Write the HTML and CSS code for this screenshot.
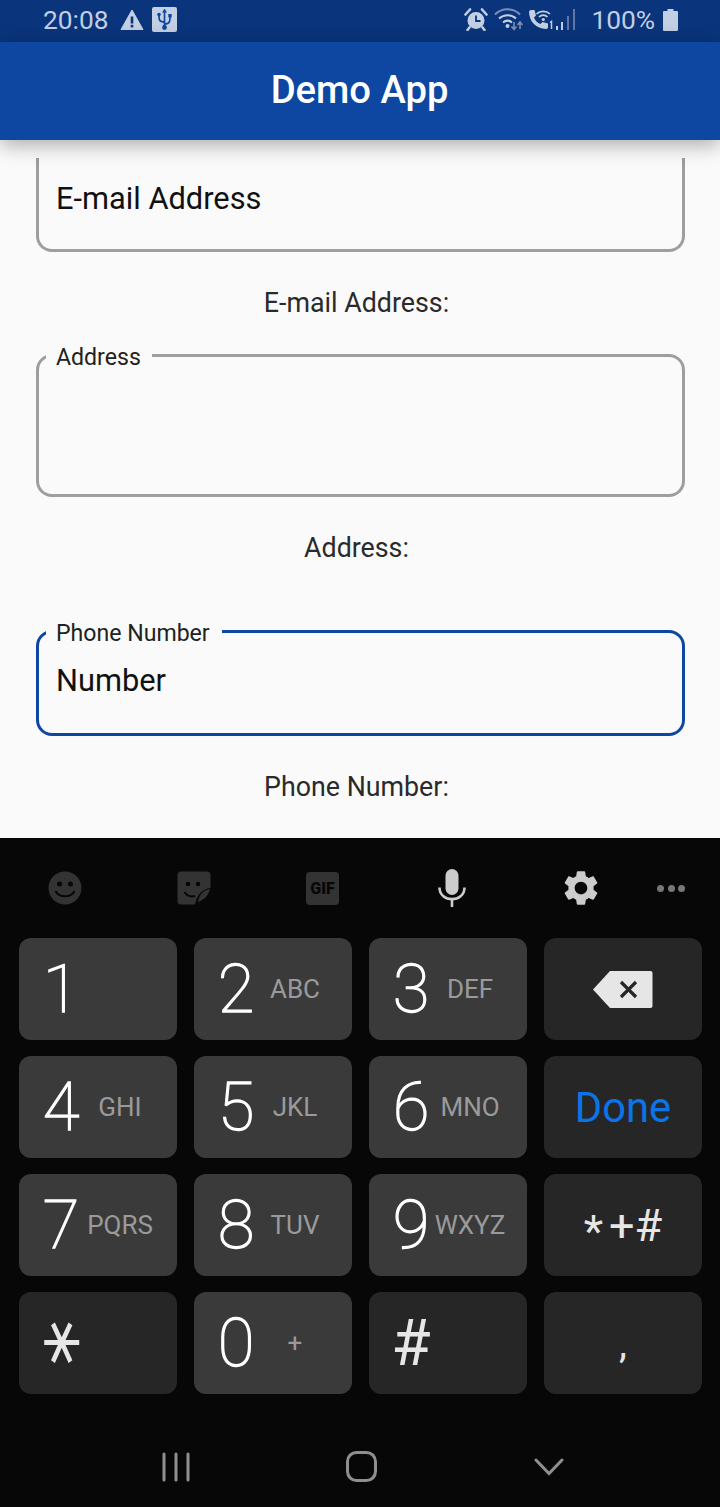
FILE: index.html
```html
<!DOCTYPE html>
<html lang="en">
<head>
    <meta charset="UTF-8">
    <meta name="viewport" content="width=device-width, initial-scale=1.0">
    <title>Demo App</title>
    <link rel="stylesheet" href="styles.css">
</head>
<body>
    <div class="status-bar">
        <span class="status-time">20:08</span>
        <svg class="icon-warning" width="24" height="22" viewBox="0 0 24 22">
            <path d="M12 1 L23 20.5 H1 Z" fill="#c3cfe2" stroke="#c3cfe2" stroke-width="1" stroke-linejoin="round"/>
            <rect x="10.7" y="7.5" width="2.6" height="7" fill="#0a357c"/>
            <rect x="10.7" y="15.8" width="2.6" height="2.6" fill="#0a357c"/>
        </svg>
        <svg class="icon-usb" width="25" height="25" viewBox="0 0 25 25">
            <rect width="25" height="25" rx="2" fill="#c3cfe2"/>
            <path d="M12.5 2.5 V21 M12.5 15 C7 15 7 12.500 7 8.500 M12.500 17 C18 17 18 14 18 10" fill="none" stroke="#0d47a1" stroke-width="1.700"/>
            <path d="M12.500 2 L15 5.500 H10 Z" fill="#0d47a1"/>
            <circle cx="7" cy="7.500" r="1.800" fill="#0d47a1"/>
            <rect x="16.300" y="7" width="3.400" height="3.400" fill="#0d47a1"/>
            <circle cx="12.500" cy="20.500" r="2.400" fill="#0d47a1"/>
        </svg>
        <div class="status-right">
            <svg width="24" height="23" viewBox="0 0 24 23">
                <circle cx="12" cy="12.500" r="8.500" fill="#c3cfe2"/>
                <path d="M12 7.500 V13 H16.500" fill="none" stroke="#0a357c" stroke-width="1.800"/>
                <path d="M1.500 6.500 L6 1.500 M22.500 6.500 L18 1.500 M5.500 19.500 L3.500 22 M18.500 19.500 L20.500 22" stroke="#c3cfe2" stroke-width="2.600" stroke-linecap="round"/>
            </svg>
            <svg class="icon-wifi" width="30" height="23" viewBox="0 0 30 23">
                <path d="M1 6.500 C8 -0.500 19 -0.500 26 6.500" fill="none" stroke="#7d90b4" stroke-width="2"/>
                <path d="M5 10.500 C10 6 17 6 22 10.500" fill="none" stroke="#c3cfe2" stroke-width="2"/>
                <path d="M9 14.500 C12 12 15 12 18 14.500" fill="none" stroke="#c3cfe2" stroke-width="2"/>
                <circle cx="13.500" cy="18" r="2" fill="#c3cfe2"/>
                <path d="M20 14 V21 M17.500 18.500 L20 21.500 L22.500 18.500" fill="none" stroke="#7d90b4" stroke-width="1.600"/>
                <path d="M26 21 V14.500 M23.500 17 L26 14 L28.500 17" fill="none" stroke="#7d90b4" stroke-width="1.600"/>
            </svg>
            <svg class="icon-call" width="26" height="22" viewBox="0 0 26 22">
                <path d="M4 1 L7.500 1 L9 6.500 L7 8.500 C8 11.500 10.500 14 13.500 15 L15.500 13 L21 14.500 L21 18 C21 19.500 20 20 19 20 C9 19.500 2.500 13 2 3 C2 2 3 1 4 1 Z" fill="#c3cfe2"/>
                <path d="M9.500 5 C13 1.500 19.500 1.500 23 5 M12 8 C14.500 5.500 18 5.500 20.500 8" fill="none" stroke="#c3cfe2" stroke-width="1.700"/>
                <circle cx="16.300" cy="10.500" r="1.600" fill="#c3cfe2"/>
                <path d="M23 13.500 L24.500 12.500 V20" fill="none" stroke="#c3cfe2" stroke-width="1.500"/>
            </svg>
            <svg class="icon-signal" width="20" height="23" viewBox="0 0 20 23">
                <rect x="0" y="18" width="2" height="4" fill="#c3cfe2"/>
                <rect x="5" y="14" width="2" height="8" fill="#c3cfe2"/>
                <rect x="11" y="8" width="2" height="14" fill="#5f77a3"/>
                <rect x="17" y="1" width="2" height="21" fill="#5f77a3"/>
            </svg>
            <span class="status-battery-text">100%</span>
            <svg width="15" height="22" viewBox="0 0 15 22">
                <path d="M4.500 0 H10.500 V2 H14 A1 1 0 0 1 15 3 V21 A1 1 0 0 1 14 22 H1 A1 1 0 0 1 0 21 V3 A1 1 0 0 1 1 2 H4.500 Z" fill="#c3cfe2"/>
            </svg>
        </div>
    </div>

    <header class="app-bar">Demo App</header>

    <main class="content">
        <div class="field field-cut">
            <div class="field-value">E-mail Address</div>
        </div>
        <p class="caption">E-mail Address:</p>

        <fieldset class="field field-tall">
            <legend>Address</legend>
        </fieldset>
        <p class="caption">Address:</p>

        <fieldset class="field field-focus">
            <legend>Phone Number</legend>
            <div class="field-value">Number</div>
        </fieldset>
        <p class="caption">Phone Number:</p>
    </main>

    <section class="keyboard">
        <div class="kb-tools">
            <svg width="34" height="34" viewBox="0 0 34 34">
                <circle cx="17" cy="17" r="16.500" fill="#333"/>
                <circle cx="11.500" cy="13" r="2.500" fill="#070707"/>
                <circle cx="22.500" cy="13" r="2.500" fill="#070707"/>
                <path d="M7.500 20 C11 27 23 27 26.500 20" fill="none" stroke="#070707" stroke-width="2"/>
            </svg>
            <svg width="34" height="34" viewBox="0 0 34 34">
                <path d="M4 0.500 H30 A3.500 3.500 0 0 1 33.500 4 V17 C25 18 20 24 18 33.500 H4 A3.500 3.500 0 0 1 0.500 30 V4 A3.500 3.500 0 0 1 4 0.500 Z" fill="#333"/>
                <path d="M33 18 C26 19 22 24 21 31 C27 29 31 25 33 18 Z" fill="#333"/>
                <circle cx="11" cy="13" r="2.300" fill="#070707"/>
                <circle cx="21" cy="13" r="2.300" fill="#070707"/>
                <path d="M7.500 21 C10 25 14 26 18 25" fill="none" stroke="#070707" stroke-width="2"/>
            </svg>
            <div class="tool-gif">GIF</div>
            <svg width="28" height="38" viewBox="0 0 28 38">
                <rect x="7.500" y="0" width="13" height="26" rx="6.500" fill="#ccc"/>
                <path d="M1.500 18.500 C1.500 34 26.500 34 26.500 18.500" fill="none" stroke="#ccc" stroke-width="2.600"/>
                <rect x="12.700" y="29" width="2.600" height="9" fill="#ccc"/>
            </svg>
            <svg width="42" height="42" viewBox="0 0 24 24">
                <path fill="#ccc" d="M19.140 12.940c.04-.3.060-.61.060-.94 0-.32-.02-.64-.07-.94l2.030-1.580c.18-.14.230-.41.120-.61l-1.920-3.320c-.12-.22-.37-.29-.59-.22l-2.390.96c-.5-.38-1.030-.7-1.620-.94l-.36-2.540c-.04-.24-.24-.41-.48-.41h-3.840c-.24 0-.43.170-.47.410l-.36 2.540c-.59.240-1.130.57-1.620.94l-2.390-.96c-.22-.08-.47 0-.59.220L2.740 8.870c-.12.210-.08.470.12.610l2.030 1.580c-.05.300-.09.630-.09.940s.02.640.07.940l-2.030 1.580c-.18.140-.23.410-.12.610l1.920 3.320c.12.220.37.290.59.220l2.390-.96c.5.380 1.030.7 1.620.94l.36 2.540c.05.240.24.410.48.410h3.840c.24 0 .44-.17.47-.41l.36-2.540c.59-.24 1.130-.56 1.620-.94l2.390.96c.22.080.47 0 .59-.22l1.920-3.320c.12-.22.070-.47-.12-.61l-2.010-1.580zM12 15.600c-1.980 0-3.600-1.620-3.600-3.600s1.620-3.600 3.600-3.600 3.600 1.620 3.600 3.600-1.620 3.600-3.600 3.600z"/>
            </svg>
            <div class="tool-dots"><i></i><i></i><i></i></div>
        </div>

        <div class="kb-keys">
            <div class="key"><span class="digit">1</span></div>
            <div class="key"><span class="digit">2</span><span class="sub">ABC</span></div>
            <div class="key"><span class="digit">3</span><span class="sub">DEF</span></div>
            <div class="key key-dark key-center">
                <svg width="60" height="37" viewBox="0 0 60 37">
                    <path d="M17 0 H57.500 A2 2 0 0 1 59.500 2 V35 A2 2 0 0 1 57.500 37 H17 L0 18.500 Z" fill="#e6e6e6"/>
                    <path d="M28 11 L43 26 M43 11 L28 26" stroke="#262626" stroke-width="3.200"/>
                </svg>
            </div>

            <div class="key"><span class="digit">4</span><span class="sub">GHI</span></div>
            <div class="key"><span class="digit">5</span><span class="sub">JKL</span></div>
            <div class="key"><span class="digit">6</span><span class="sub">MNO</span></div>
            <div class="key key-dark key-center key-done">Done</div>

            <div class="key"><span class="digit">7</span><span class="sub">PQRS</span></div>
            <div class="key"><span class="digit">8</span><span class="sub">TUV</span></div>
            <div class="key"><span class="digit">9</span><span class="sub">WXYZ</span></div>
            <div class="key key-dark key-center key-symbols"><span class="symbol-star">*</span>+#</div>

            <div class="key key-dark"><span class="digit digit-star">⚹</span></div>
            <div class="key"><span class="digit">0</span><span class="sub sub-plus">+</span></div>
            <div class="key key-dark"><span class="digit digit-hash">#</span></div>
            <div class="key key-dark key-center key-comma">,</div>
        </div>

        <nav class="kb-nav">
            <svg width="28" height="30" viewBox="0 0 28 30">
                <path d="M2 2 V28 M14 2 V28 M26 2 V28" stroke="#8f8f8f" stroke-width="3" stroke-linecap="round"/>
            </svg>
            <svg width="32" height="32" viewBox="0 0 32 32">
                <rect x="1.500" y="1.500" width="28" height="28" rx="9" fill="none" stroke="#8f8f8f" stroke-width="3"/>
            </svg>
            <svg width="30" height="20" viewBox="0 0 30 20">
                <path d="M2 3 L15 16.500 L28 3" fill="none" stroke="#8f8f8f" stroke-width="3" stroke-linecap="round"/>
            </svg>
        </nav>
    </section>
</body>
</html>
```

FILE: styles.css
```css
* {
    box-sizing: border-box;
}
body {
    margin: 0;
    width: 720px;
    height: 1507px;
    overflow: hidden;
    display: flex;
    flex-direction: column;
    font-family: Roboto, "Liberation Sans", sans-serif;
    background: #fafafa;
}

/* status bar */
.status-bar {
    height: 42px;
    flex: none;
    display: flex;
    align-items: center;
    padding: 0 42px 3px 43px;
    background: #0a357c;
    color: #c3cfe2;
    font-size: 26.3px;
}
.status-time {
    width: 65px;
}
.icon-warning {
    margin-left: 12px;
}
.icon-usb {
    margin-left: 8px;
}
.status-right {
    margin-left: auto;
    display: flex;
    align-items: center;
}
.icon-wifi {
    margin-left: 6px;
}
.icon-call {
    margin-left: 3px;
}
.icon-signal {
    margin-left: 3px;
}
.status-battery-text {
    margin: 0 8px 0 15px;
}

/* app bar */
.app-bar {
    height: 98px;
    flex: none;
    position: relative;
    z-index: 1;
    display: flex;
    align-items: center;
    justify-content: center;
    padding: 0 1px 2px 0;
    background: #0d47a1;
    color: #fff;
    font-size: 38.2px;
    font-weight: 500;
    box-shadow: 0 4px 20px rgba(0,0,0,0.35);
}

/* form */
.content {
    height: 698px;
    flex: none;
    padding: 18px 35px 0 36px;
    overflow: hidden;
    background: #fafafa;
}
.field {
    margin: 0;
    padding: 0 17px;
    min-width: 0;
    border: 3px solid #9e9e9e;
    border-radius: 16px;
}
.field legend {
    margin-left: -10px;
    padding: 0 12px 0 10px;
    height: 20px;
    line-height: 26px;
    font-size: 23.1px;
    color: #212121;
}
.field-cut {
    height: 94px;
    padding-top: 23px;
    border-top: none;
    border-top-left-radius: 0;
    border-top-right-radius: 0;
}
.field-tall {
    height: 151px;
}
.field-tall legend {
    height: 18px;
    line-height: 24px;
    padding-right: 11px;
}
.field-focus {
    height: 115px;
    border-color: #0d47a1;
}
.field-value {
    font-size: 30.8px;
    line-height: 36px;
    color: #111;
}
.field-focus .field-value {
    padding-top: 22px;
}
.caption {
    margin: 0;
    padding-right: 8px;
    text-align: center;
    font-size: 26.8px;
    line-height: 32px;
    color: #2a2a2a;
}
.content .field-cut + .caption {
    margin: 35px 0 27px;
}
.content .field-tall + .caption {
    margin: 35px 0 57px;
}
.content .field-focus + .caption {
    margin-top: 35px;
}

/* keyboard */
.keyboard {
    flex: 1;
    background: #070707;
}
.kb-tools {
    height: 100px;
    display: grid;
    grid-template-columns: repeat(5, 129px) 52px;
    justify-items: center;
    align-items: center;
}
.tool-gif {
    width: 33px;
    height: 33px;
    display: flex;
    align-items: center;
    justify-content: center;
    border-radius: 4px;
    background: #333;
    color: #070707;
    font-size: 16px;
    font-weight: 900;
}
.tool-dots {
    display: flex;
    gap: 3.500px;
}
.tool-dots i {
    width: 7px;
    height: 7px;
    border-radius: 50%;
    background: #777;
}
.kb-keys {
    display: grid;
    grid-template-columns: repeat(4, 158px);
    grid-auto-rows: 102px;
    gap: 16px 17px;
    padding-left: 19px;
}
.key {
    display: flex;
    align-items: center;
    border-radius: 12px;
    background: #3a3a3a;
    color: #fff;
}
.key-dark {
    background: #262626;
}
.key-center {
    justify-content: center;
}
.digit {
    width: 84px;
    padding-top: 1px;
    text-align: center;
    font-size: 67px;
    font-weight: 100;
    -webkit-text-stroke: 1.3px #fff;
    line-height: 1;
}
.sub {
    width: 34px;
    display: flex;
    justify-content: center;
    white-space: nowrap;
    font-size: 26px;
    color: #9a9a9a;
}
.sub-plus {
    font-size: 26px;
}
.digit-star {
    padding-top: 0;
    font-family: "DejaVu Sans", sans-serif;
    font-weight: 400;
    font-size: 62px;
    color: #e6e6e6;
    -webkit-text-stroke: 0;
    transform: translateY(-7px) scaleY(1.25);
}
.digit-hash {
    font-size: 64px;
    font-weight: 400;
    color: #e6e6e6;
    -webkit-text-stroke: 0;
}
.key-done {
    color: #0a74e8;
    font-size: 41.7px;
}
.key-symbols {
    color: #e6e6e6;
    font-size: 45px;
}
.symbol-star {
    margin-right: 6px;
    vertical-align: -8px;
    display: inline-block;
    transform: translateY(6px);
}
.key-comma {
    color: #e6e6e6;
    font-size: 40px;
}
.kb-nav {
    display: flex;
    align-items: center;
    justify-content: center;
    gap: 156px;
    margin-top: 57px;
    padding-left: 5px;
}
```
